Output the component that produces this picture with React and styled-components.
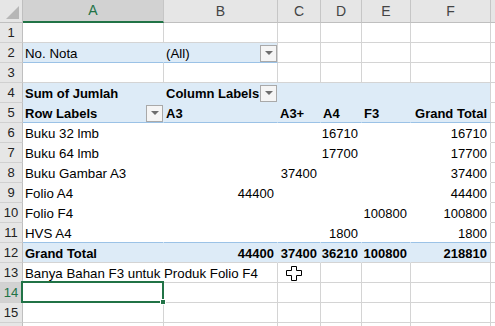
import React from 'react';
import styled, { createGlobalStyle } from 'styled-components';

const GRID = '#d4d4d4';
const BLUE = '#ddebf7';
const BLUE_LINE = '#9bc2e6';
const GREEN = '#217346';

const GlobalStyle = createGlobalStyle`
  *, *::before, *::after { box-sizing: border-box; }
  html, body { margin: 0; padding: 0; background: #fff; }
  body {
    font-family: "Liberation Sans", Arial, sans-serif;
    color: #000;
    overflow: hidden;
  }
`;

const Sheet = styled.div`
  display: grid;
  grid-template-columns: 23px 141px 114px 43px 41px 49px 80px 1fr;
  grid-template-rows: 23px repeat(16, 20px);
  width: 495px;
  height: 326px;
  overflow: hidden;
`;

const Corner = styled.div`
  position: relative;
  background: #e6e6e6;
  border-right: 1px solid #bfbfbf;
  border-bottom: 1px solid #bfbfbf;

  &::after {
    content: '';
    position: absolute;
    right: 3px;
    bottom: 3px;
    border-left: 13px solid transparent;
    border-bottom: 13px solid #b7b7b7;
  }
`;

const ColHead = styled.div`
  display: flex;
  align-items: center;
  justify-content: center;
  padding-bottom: 1px;
  background: ${(p) => (p.$active ? '#d2d2d2' : '#e6e6e6')};
  color: ${(p) => (p.$active ? GREEN : '#444')};
  border-right: 1px solid #c6c6c6;
  border-bottom: ${(p) => (p.$active ? `2px solid ${GREEN}` : '1px solid #bfbfbf')};
  font-size: 14px;
`;

const RowHead = styled.div`
  display: flex;
  align-items: center;
  justify-content: center;
  background: ${(p) => (p.$active ? '#d2d2d2' : '#e6e6e6')};
  color: ${(p) => (p.$active ? GREEN : '#222')};
  border-right: 1px solid #bfbfbf;
  border-bottom: 1px solid #d0d0d0;
  font-size: 13px;
`;

const Cell = styled.div`
  position: relative;
  display: flex;
  align-items: center;
  justify-content: ${(p) => (p.$align === 'right' ? 'flex-end' : 'flex-start')};
  padding: 1px ${(p) => (p.$drop ? 0 : 3)}px 0 2px;
  background: ${(p) => p.$bg || '#fff'};
  border-right: 1px solid ${(p) => p.$br || GRID};
  border-bottom: 1px solid ${(p) => p.$bb || GRID};
  font-size: ${(p) => (p.$bold || p.$num ? '13px' : '13.3px')};
  font-weight: ${(p) => (p.$bold ? 700 : 400)};
  white-space: nowrap;
  overflow: ${(p) => (p.$spill || p.$raised ? 'visible' : 'hidden')};
  z-index: ${(p) => (p.$raised ? 2 : p.$spill ? 1 : 0)};
`;

const DropButton = styled.span`
  margin-left: auto;
  flex-shrink: 0;
  width: 17px;
  height: 17px;
  display: flex;
  align-items: center;
  justify-content: center;
  background: #f5f5f5;
  border: 1px solid #a9a9a9;

  &::after {
    content: '';
    border-left: 4px solid transparent;
    border-right: 4px solid transparent;
    border-top: 4px solid #6e6e6e;
  }
`;

const Selection = styled.div`
  position: absolute;
  top: -2px;
  left: -2px;
  right: -1px;
  bottom: -1px;
  border: 2px solid ${GREEN};
  pointer-events: none;

  &::after {
    content: '';
    position: absolute;
    right: -4px;
    bottom: -4px;
    width: 6px;
    height: 6px;
    background: ${GREEN};
    border: 1px solid #fff;
  }
`;

const Cursor = styled.svg`
  position: absolute;
  left: 8px;
  top: 3px;
`;

const PlusCursor = () => (
  <Cursor width="16" height="15" viewBox="0 0 16 15">
    <path
      d="M5.5 0.5h5v4h5v5h-5v5h-5v-5h-5v-5h5z"
      fill="#fff"
      stroke="#000"
      strokeWidth="1"
    />
  </Cursor>
);

const cols = ['A', 'B', 'C', 'D', 'E', 'F', ''];

const white = { bg: '#fff', br: '#fff', bb: '#fff' };
const blue = { bg: BLUE, br: BLUE, bb: BLUE };

const pivotRow = (cells, style) => cells.map((c, i) => ({
  ...style,
  ...(i === 5 ? { br: GRID } : {}),
  ...c,
}));

const num = (text) => ({ text, align: 'right', num: true });
const boldNum = (text) => ({ text, align: 'right', bold: true });
const blank = () => [{}, {}, {}, {}, {}, {}];

const rows = [
  blank(),
  [
    { text: 'No. Nota', bg: BLUE, br: BLUE, bb: BLUE_LINE },
    { text: '(All)', bg: BLUE, bb: BLUE_LINE, drop: true },
    {}, {}, {}, {},
  ],
  blank(),
  pivotRow([
    { text: 'Sum of Jumlah', bold: true },
    { text: 'Column Labels', bold: true, drop: true },
    {}, {}, {}, {},
  ], blue),
  pivotRow([
    { text: 'Row Labels', bold: true, drop: true },
    { text: 'A3', bold: true },
    { text: 'A3+', bold: true },
    { text: 'A4', bold: true },
    { text: 'F3', bold: true },
    { text: 'Grand Total', bold: true, align: 'right' },
  ], { ...blue, bb: BLUE_LINE }),
  pivotRow([{ text: 'Buku 32 lmb' }, {}, {}, num('16710'), {}, num('16710')], white),
  pivotRow([{ text: 'Buku 64 lmb' }, {}, {}, num('17700'), {}, num('17700')], white),
  pivotRow([{ text: 'Buku Gambar A3' }, {}, num('37400'), {}, {}, num('37400')], white),
  pivotRow([{ text: 'Folio A4' }, num('44400'), {}, {}, {}, num('44400')], white),
  pivotRow([{ text: 'Folio F4' }, {}, {}, {}, num('100800'), num('100800')], white),
  pivotRow([{ text: 'HVS A4' }, {}, {}, num('1800'), {}, num('1800')], { ...white, bb: BLUE_LINE }),
  pivotRow([
    { text: 'Grand Total', bold: true },
    boldNum('44400'),
    boldNum('37400'),
    boldNum('36210'),
    boldNum('100800'),
    boldNum('218810'),
  ], { ...blue, bb: GRID }),
  [
    { text: 'Banya Bahan F3 untuk Produk Folio F4', spill: true, br: '#fff' },
    {},
    { cursor: true },
    {}, {}, {},
  ],
  [{ selected: true }, {}, {}, {}, {}, {}],
  blank(),
  blank(),
];

const App = () => (
  <>
    <GlobalStyle />
    <Sheet>
      <Corner />
      {cols.map((c, i) => (
        <ColHead key={`h${i}`} $active={c === 'A'}>{c}</ColHead>
      ))}
      {rows.map((row, r) => (
        <React.Fragment key={`r${r}`}>
          <RowHead $active={r === 13}>{r < 15 ? r + 1 : ''}</RowHead>
          {[...row, {}].map((cell, i) => (
            <Cell
              key={`c${r}-${i}`}
              $bg={cell.bg}
              $br={cell.br}
              $bb={cell.bb}
              $bold={cell.bold}
              $num={cell.num}
              $align={cell.align}
              $drop={cell.drop}
              $spill={cell.spill}
              $raised={cell.selected}
            >
              {cell.text}
              {cell.drop && <DropButton />}
              {cell.cursor && <PlusCursor />}
              {cell.selected && <Selection />}
            </Cell>
          ))}
        </React.Fragment>
      ))}
    </Sheet>
  </>
);

export default App;
